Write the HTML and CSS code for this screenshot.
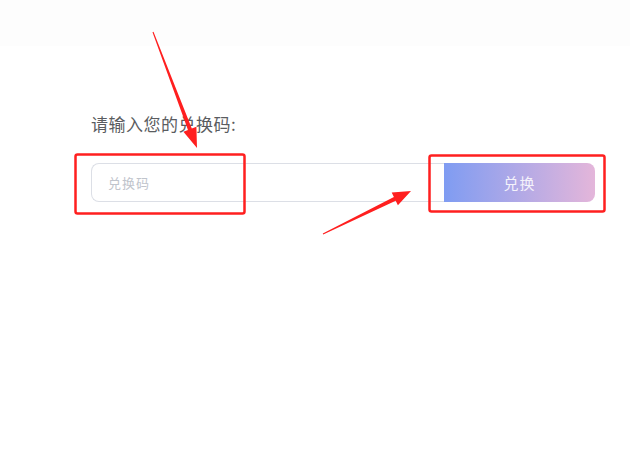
FILE: index.html
```html
<!DOCTYPE html>
<html lang="zh-CN">
<head>
  <meta charset="UTF-8">
  <title>兑换码</title>
  <link rel="stylesheet" href="styles.css">
</head>
<body>
  <div class="top-band"></div>
  <div class="redeem">
    <div class="redeem-label">请输入您的兑换码:</div>
    <div class="redeem-row">
      <input class="redeem-input" type="text" placeholder="兑换码">
      <button class="redeem-btn">兑换</button>
    </div>
  </div>
  <!-- annotation marks drawn over the page -->
  <svg class="marks" width="630" height="473" viewBox="0 0 630 473">
    <rect x="75.5" y="154.5" width="169" height="59" rx="2" fill="none" stroke="#ff1f1f" stroke-width="2.5"/>
    <rect x="429.5" y="155.5" width="175" height="56" rx="2" fill="none" stroke="#ff1f1f" stroke-width="2.5"/>
    <polygon fill="#ff1f1f" points="152.5,32.2 188.0,130.0 183.4,131.8 197,148 196.4,126.8 191.8,128.6 153.5,31.8"/>
    <polygon fill="#ff1f1f" points="322.8,233.6 393.9,197.1 391.7,192.6 411,191 397.9,205.2 395.7,200.7 323.2,234.4"/>
  </svg>
</body>
</html>
```

FILE: styles.css
```css
body {
  margin: 0;
  background: #fff;
  font-family: 'Noto Sans CJK SC', 'Noto Sans', sans-serif;
  position: relative;
  min-height: 473px;
}
.top-band {
  height: 46px;
  background: #fdfdfd;
}
.redeem {
  padding: 66px 35px 0 91px;
}
.redeem-label {
  font-size: 17px;
  line-height: 24px;
  letter-spacing: 0.5px;
  color: #5a5c60;
}
.redeem-row {
  display: flex;
  margin-top: 27px;
  height: 39px;
}
.redeem-input {
  flex: 1;
  box-sizing: border-box;
  height: 39px;
  border: 1px solid #dcdfe6;
  border-right: none;
  border-radius: 8px 0 0 8px;
  padding: 0 16px;
  font-family: inherit;
  font-size: 13px;
  letter-spacing: 1px;
  color: #606266;
  outline: none;
}
.redeem-input::placeholder {
  color: #c0c4cc;
}
.redeem-btn {
  width: 151px;
  height: 39px;
  border: none;
  border-radius: 0 8px 8px 0;
  background: linear-gradient(90deg, #7f9cf2, #e4b6da);
  color: #f4f2fb;
  font-family: inherit;
  font-size: 15px;
  letter-spacing: 1px;
  cursor: pointer;
}
.marks {
  position: absolute;
  top: 0;
  left: 0;
  pointer-events: none;
}
```
